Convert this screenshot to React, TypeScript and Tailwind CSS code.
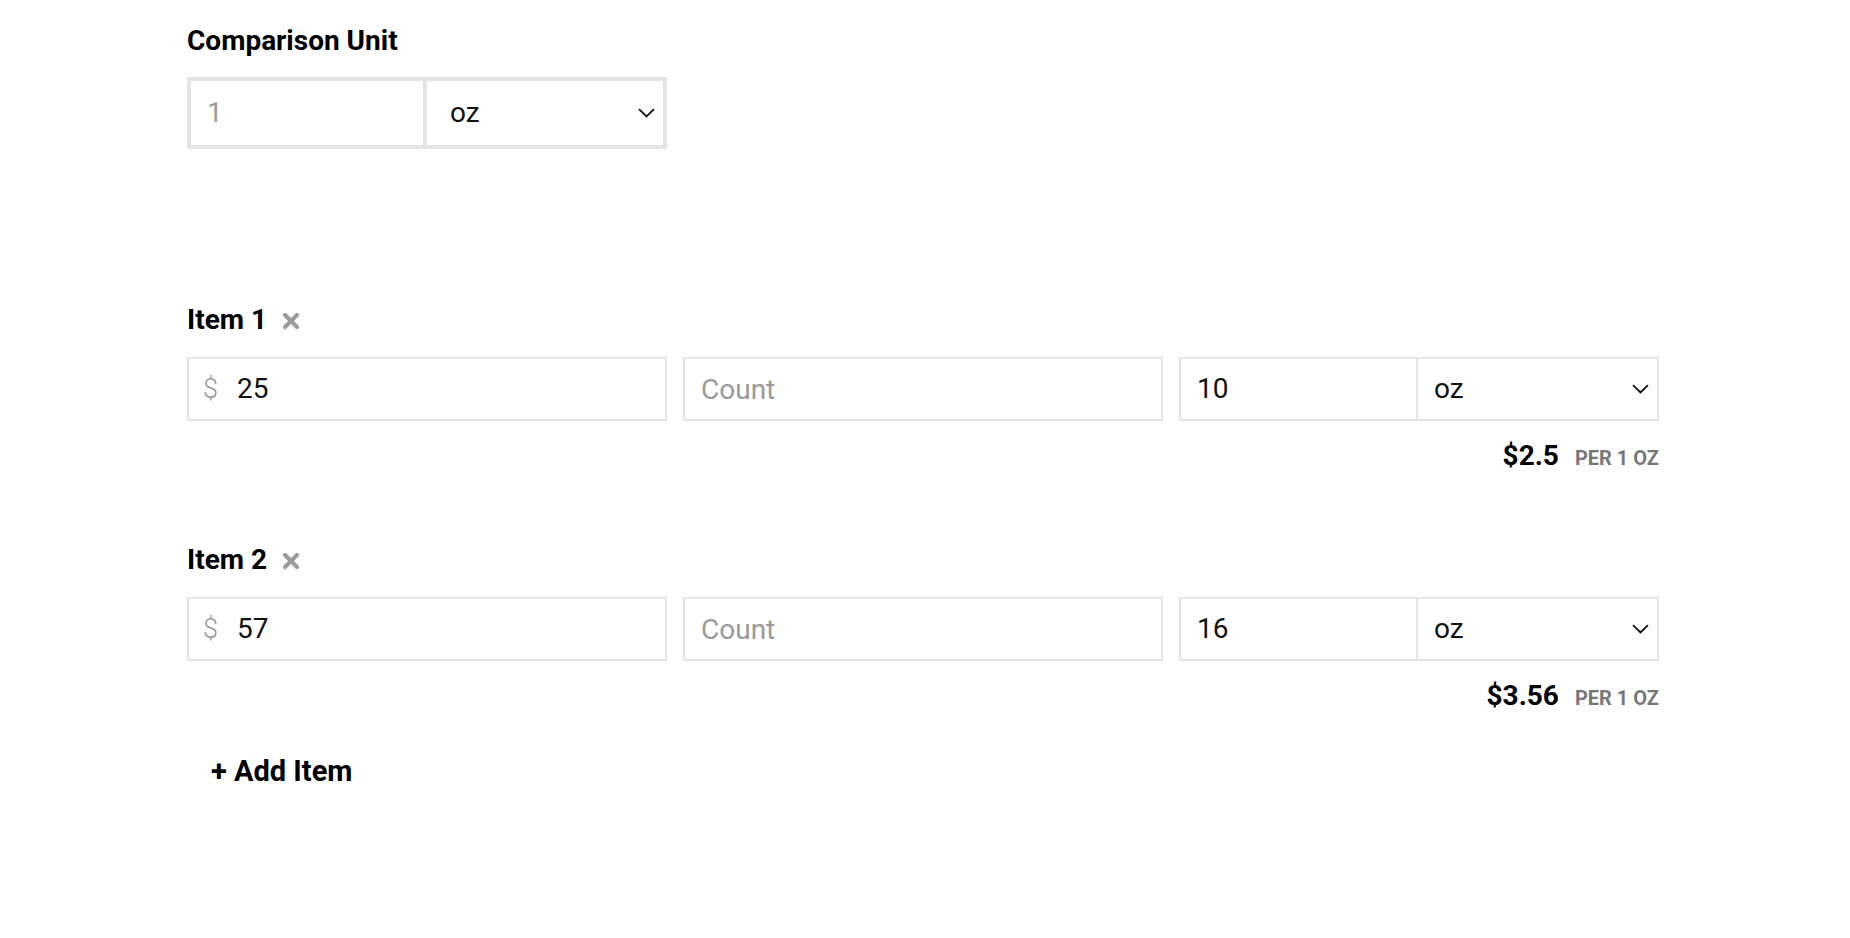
import { useState } from 'react'

type Item = { id: number; price: string; count: string; qty: string; unit: string }

const units = ['oz', 'lb', 'g', 'kg', 'ml', 'l', 'fl oz']

function Chevron() {
  return (
    <svg
      className="pointer-events-none absolute right-[8px] top-1/2 -translate-y-1/2"
      width="17"
      height="10"
      viewBox="0 0 17 10"
      fill="none"
    >
      <path d="M1 1.2 L8.5 8.5 L16 1.2" stroke="#111" strokeWidth="1.8" />
    </svg>
  )
}

function RemoveIcon() {
  return (
    <svg width="18" height="18" viewBox="0 0 18 18" fill="none">
      <path d="M3 3 L15 15 M15 3 L3 15" stroke="#9a9a9a" strokeWidth="4.2" strokeLinecap="round" />
    </svg>
  )
}

function UnitSelect({ value, onChange, pad }: { value: string; onChange: (v: string) => void; pad: string }) {
  return (
    <div className="relative min-w-0 flex-1">
      <select
        value={value}
        onChange={(e) => onChange(e.target.value)}
        className={`h-full w-full appearance-none bg-white text-[28px] leading-8 text-[#111] outline-none ${pad}`}
      >
        {units.map((u) => (
          <option key={u} value={u}>
            {u}
          </option>
        ))}
      </select>
      <Chevron />
    </div>
  )
}

function perUnit(item: Item) {
  const p = parseFloat(item.price)
  const q = parseFloat(item.qty)
  if (!p || !q) return null
  const c = parseFloat(item.count) || 1
  return Math.round((p / (q * c)) * 100) / 100
}

export default function App() {
  const [cmpQty, setCmpQty] = useState('')
  const [cmpUnit, setCmpUnit] = useState('oz')
  const [items, setItems] = useState<Item[]>([
    { id: 1, price: '25', count: '', qty: '10', unit: 'oz' },
    { id: 2, price: '57', count: '', qty: '16', unit: 'oz' },
  ])

  function update(id: number, patch: Partial<Item>) {
    setItems((list) => list.map((it) => (it.id === id ? { ...it, ...patch } : it)))
  }

  return (
    <div className="min-h-screen bg-white font-['Roboto','Liberation_Sans',sans-serif] text-[#111]">
      <div className="ml-[187px] w-[1472px] pt-[25px] pb-20">
        <h2 className="text-[28px] font-bold leading-8 text-black">Comparison Unit</h2>
        <div className="mt-[20px] flex h-[72px] w-[480px] border-4 border-[#e5e4e2]">
          <input
            value={cmpQty}
            onChange={(e) => setCmpQty(e.target.value)}
            placeholder="1"
            className="w-[236px] shrink-0 border-r-4 border-[#e5e4e2] px-[16px] text-[28px] leading-8 outline-none placeholder:text-[#9a9a9a]"
          />
          <UnitSelect value={cmpUnit} onChange={setCmpUnit} pad="pl-[23px]" />
        </div>

        <div className="mt-[155px] flex flex-col gap-[72px]">
          {items.map((item, i) => {
            const v = perUnit(item)
            return (
              <div key={item.id}>
                <div className="flex items-center gap-[15px]">
                  <span className="text-[28px] font-bold leading-8 text-black">Item {i + 1}</span>
                  <button
                    onClick={() => setItems((list) => list.filter((x) => x.id !== item.id))}
                    className="cursor-pointer pt-[2px]"
                  >
                    <RemoveIcon />
                  </button>
                </div>
                <div className="mt-[21px] flex gap-4">
                  <label className="flex h-16 w-[480px] items-center border-2 border-[#e5e5e5] pl-[14px] pr-[16px]">
                    <span className="text-[27px] font-light leading-8 text-[#9a9a9a]">$</span>
                    <input
                      value={item.price}
                      onChange={(e) => update(item.id, { price: e.target.value })}
                      className="ml-[19px] w-full text-[28px] leading-8 outline-none"
                    />
                  </label>
                  <input
                    value={item.count}
                    onChange={(e) => update(item.id, { count: e.target.value })}
                    placeholder="Count"
                    className="h-16 w-[480px] border-2 border-[#e5e5e5] px-[16px] text-[28px] leading-8 outline-none placeholder:text-[#9a9a9a]"
                  />
                  <div className="flex h-16 w-[480px] border-2 border-[#e5e5e5]">
                    <input
                      value={item.qty}
                      onChange={(e) => update(item.id, { qty: e.target.value })}
                      className="w-[237px] shrink-0 border-r-2 border-[#e5e5e5] px-[16px] text-[28px] leading-8 outline-none"
                    />
                    <UnitSelect value={item.unit} onChange={(u) => update(item.id, { unit: u })} pad="pl-[16px]" />
                  </div>
                </div>
                <div className="mt-[19px] flex h-8 items-baseline justify-end gap-[16px]">
                  <span className="text-[28px] font-bold leading-8 text-black">{v === null ? '—' : `$${v}`}</span>
                  <span className="text-[20px] font-bold uppercase leading-8 text-[#777]">
                    per {cmpQty || 1} {cmpUnit}
                  </span>
                </div>
              </div>
            )
          })}
        </div>

        <button
          onClick={() =>
            setItems((list) => [
              ...list,
              { id: Date.now(), price: '', count: '', qty: '', unit: cmpUnit },
            ])
          }
          className="mt-[43px] ml-[24px] cursor-pointer text-[29px] font-bold leading-8 text-black"
        >
          + Add Item
        </button>
      </div>
    </div>
  )
}
